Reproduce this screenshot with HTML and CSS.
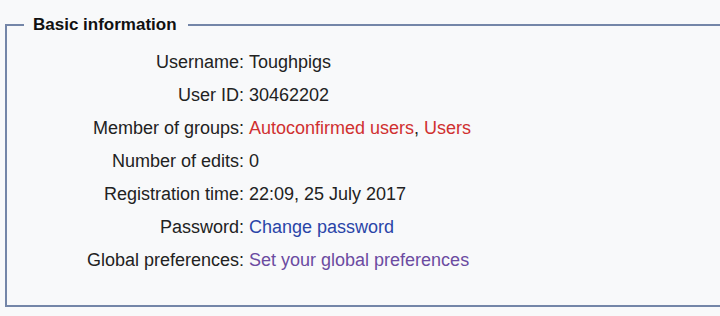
FILE: index.html
```html
<!DOCTYPE html>
<html lang="en">
<head>
<meta charset="utf-8">
<title>Basic information</title>
<link rel="stylesheet" href="styles.css">
</head>
<body>
<div class="page">
  <fieldset class="section">
    <legend class="section-title">Basic information</legend>
    <dl class="info">
      <dt>Username:</dt><dd>Toughpigs</dd>
      <dt>User ID:</dt><dd>30462202</dd>
      <dt>Member of groups:</dt><dd><a class="new" href="#">Autoconfirmed users</a>, <a class="new" href="#">Users</a></dd>
      <dt>Number of edits:</dt><dd>0</dd>
      <dt>Registration time:</dt><dd>22:09, 25 July 2017</dd>
      <dt>Password:</dt><dd><a class="link" href="#">Change password</a></dd>
      <dt>Global preferences:</dt><dd><a class="visited" href="#">Set your global preferences</a></dd>
    </dl>
  </fieldset>
</div>
</body>
</html>
```
FILE: styles.css
```css
html, body {
  margin: 0;
  padding: 0;
  background: #f8f9fa;
}
body {
  font-family: "Liberation Sans", Arial, sans-serif;
  color: #222;
  overflow: hidden;
  width: 720px;
  height: 316px;
}
.page {
  padding: 15px 0 0 5px;
}
.section {
  margin: 0 -30px 0 0;
  border: 2px solid #7486a8;
  padding: 11px 0 28px 0;
  min-width: 0;
}
.section-title {
  margin-left: 17px;
  padding: 0 11px 0 9px;
  font-size: 17px;
  font-weight: bold;
  color: #111;
}
.info {
  margin: 0;
  display: grid;
  grid-template-columns: 237px auto;
  column-gap: 5px;
  font-size: 18px;
  line-height: 33px;
}
.info dt {
  text-align: right;
  white-space: nowrap;
}
.info dd {
  margin: 0;
  white-space: nowrap;
}
.info a {
  text-decoration: none;
}
.info a.new {
  color: #d03030;
}
.info a.link {
  color: #2a45a8;
}
.info a.visited {
  color: #6b4ba1;
}
```
